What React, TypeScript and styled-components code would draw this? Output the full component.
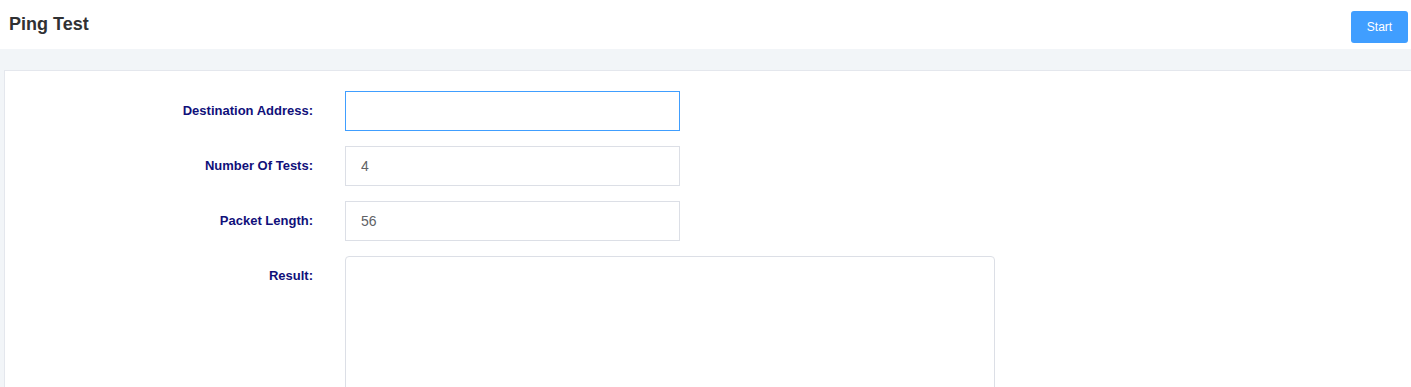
import styled, { createGlobalStyle } from "styled-components";

const GlobalStyle = createGlobalStyle`
  html, body {
    margin: 0;
    padding: 0;
    background: #f2f5f8;
    font-family: "Liberation Sans", Arial, sans-serif;
    overflow: hidden;
  }
`;

const Page = styled.div`
  width: 1411px;
  height: 387px;
  display: flex;
  flex-direction: column;
`;

const Header = styled.header`
  height: 49px;
  flex-shrink: 0;
  background: #fff;
  display: flex;
  align-items: center;
  justify-content: space-between;
  padding: 0 3px 0 9px;
  box-sizing: border-box;
`;

const Title = styled.h1`
  margin: 0;
  font-size: 18px;
  font-weight: 700;
  color: #303133;
`;

const StartButton = styled.button`
  width: 57px;
  height: 32px;
  margin-top: 4px;
  border: none;
  border-radius: 3px;
  background: #409eff;
  color: #fff;
  font-family: inherit;
  font-size: 12px;
  cursor: pointer;
`;

const Body = styled.main`
  flex: 1;
  padding: 21px 0 0 4px;
  min-height: 0;
`;

const Card = styled.section`
  height: 100%;
  background: #fff;
  border-top: 1px solid #e4e7ed;
  border-left: 1px solid #e4e7ed;
  padding-top: 20px;
  box-sizing: border-box;
  display: flex;
  flex-direction: column;
  gap: 15px;
`;

const Row = styled.div`
  display: flex;
  align-items: flex-start;
`;

const Label = styled.label`
  width: 308px;
  padding-right: 32px;
  box-sizing: content-box;
  text-align: right;
  line-height: 40px;
  font-size: 13px;
  font-weight: 700;
  color: #10107a;
`;

const Input = styled.input`
  width: 335px;
  height: 40px;
  box-sizing: border-box;
  padding: 0 15px;
  border: 1px solid #dcdfe6;
  border-radius: 0;
  font-family: inherit;
  font-size: 14px;
  color: #606266;
  caret-color: #303133;
  outline: none;
  &:focus {
    border-color: #409eff;
  }
`;

const Result = styled.textarea`
  width: 650px;
  height: 150px;
  box-sizing: border-box;
  border: 1px solid #dcdfe6;
  border-radius: 4px;
  resize: none;
  outline: none;
  font-family: inherit;
`;

export default function App() {
  return (
    <Page>
      <GlobalStyle />
      <Header>
        <Title>Ping Test</Title>
        <StartButton>Start</StartButton>
      </Header>
      <Body>
        <Card>
          <Row>
            <Label>Destination Address:</Label>
            <Input autoFocus defaultValue="" />
          </Row>
          <Row>
            <Label>Number Of Tests:</Label>
            <Input defaultValue="4" />
          </Row>
          <Row>
            <Label>Packet Length:</Label>
            <Input defaultValue="56" />
          </Row>
          <Row>
            <Label>Result:</Label>
            <Result />
          </Row>
        </Card>
      </Body>
    </Page>
  );
}
